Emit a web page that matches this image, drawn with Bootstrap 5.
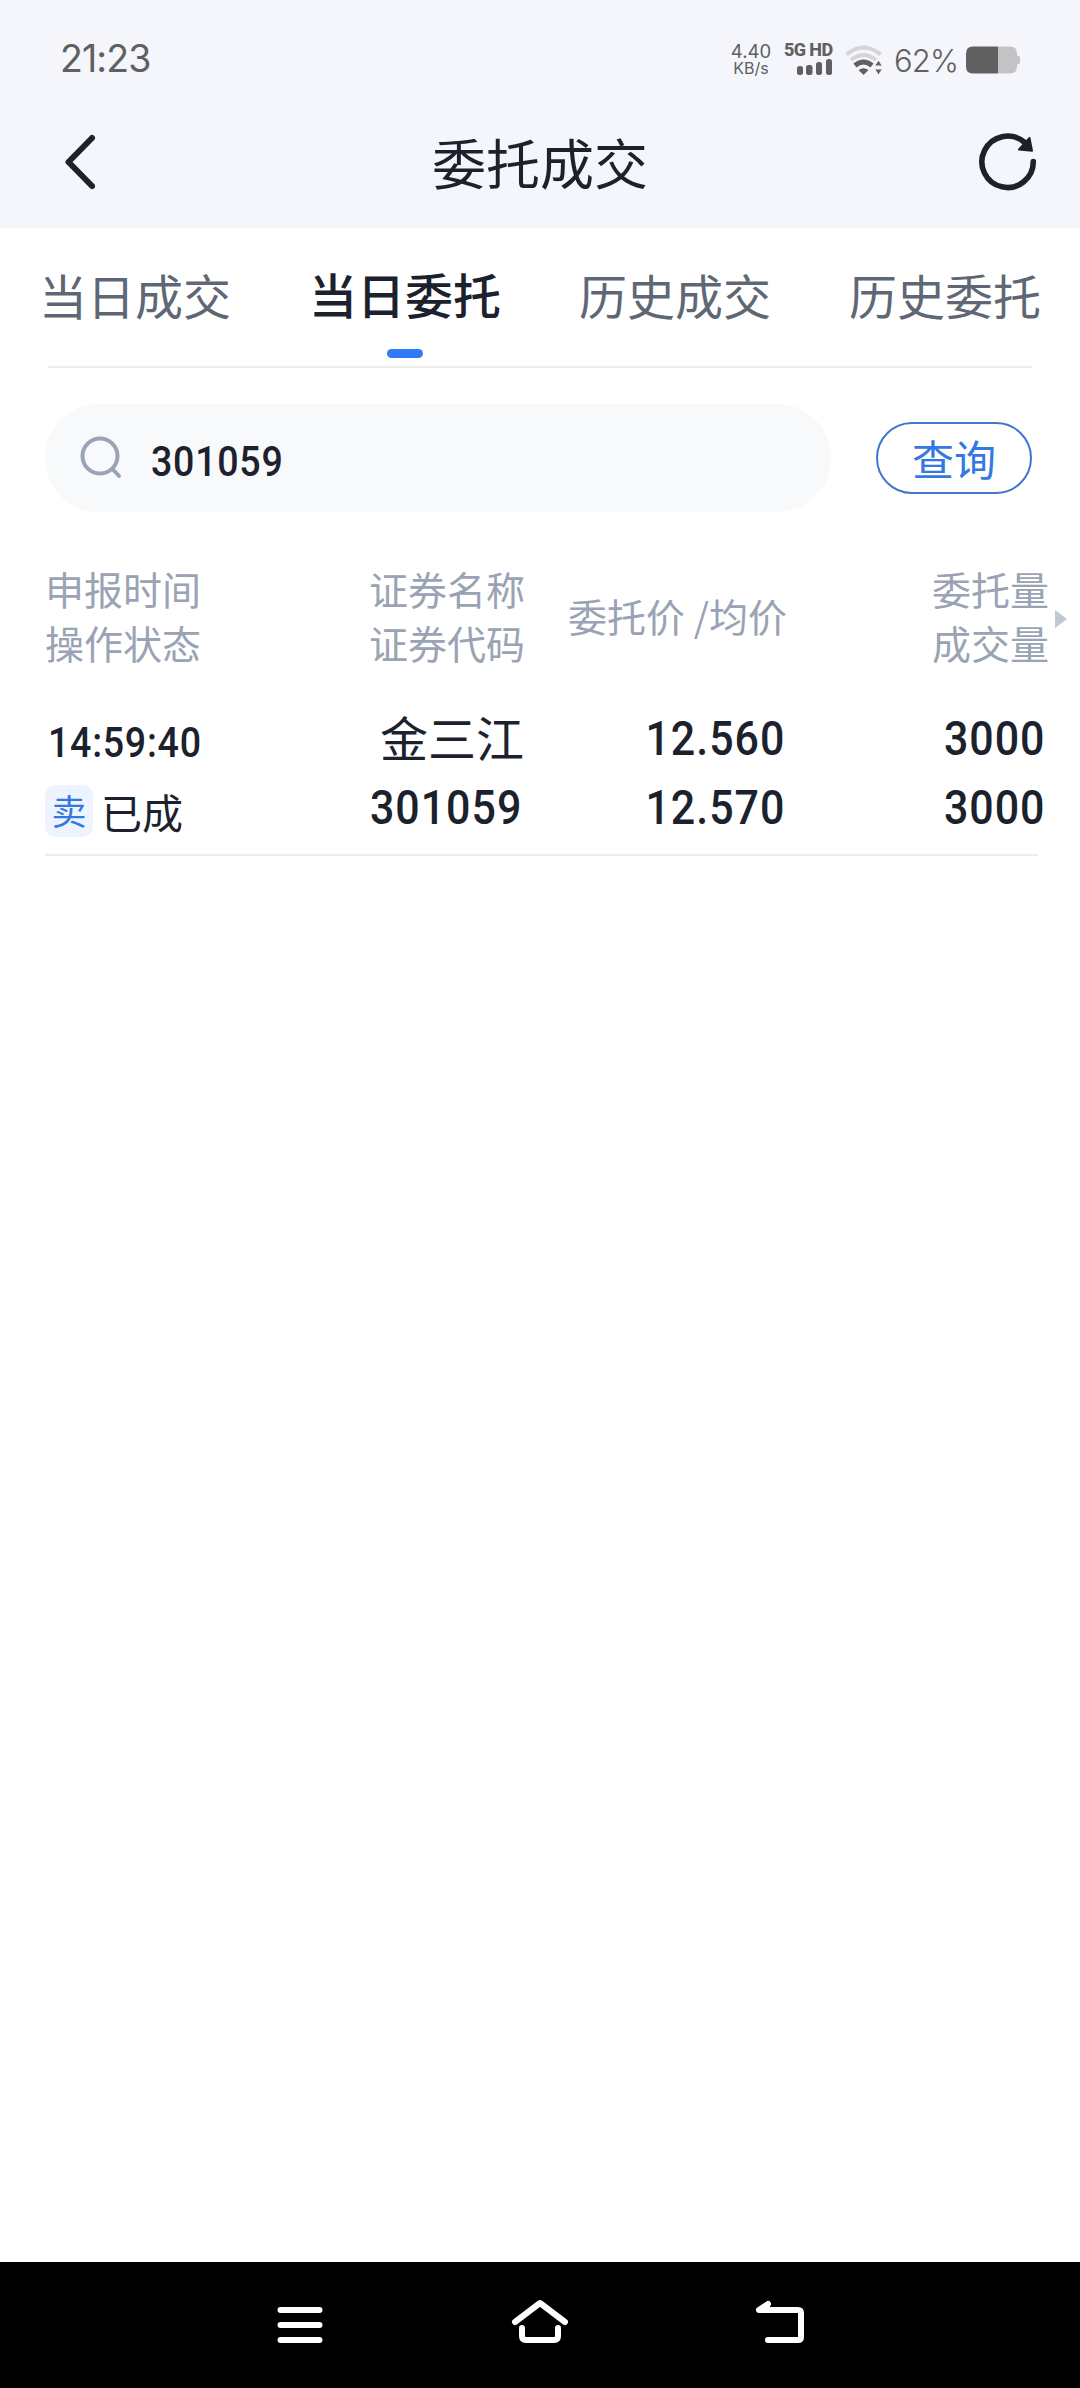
<!DOCTYPE html>
<html lang="zh-CN">
<head>
<meta charset="utf-8">
<meta name="viewport" content="width=device-width, initial-scale=1">
<title>委托成交</title>
<link href="https://cdn.jsdelivr.net/npm/bootstrap@5.3.0/dist/css/bootstrap.min.css" rel="stylesheet">
<style>
  body { font-family: "Noto Sans CJK SC", sans-serif; color: #1b222d; background: #fff; }
  svg { display: block; flex: none; }
  .screen { width: 1080px; height: 2388px; }
  .top-area { background: #f4f6fb; height: 228px; }
  .status-bar { height: 96px; padding: 20px 60px 0 60px; color: #606060; font-family: Inter, sans-serif; line-height: 1; }
  .clock { font-size: 37.5px; letter-spacing: -.9px; margin-top: 2px; }
  .net-rate { width: 42px; font-size: 18.5px; line-height: 17px; margin-right: 12px; margin-top: 2px; }
  .net-rate small { font-size: 16px; display: block; line-height: 16px; }
  .net-type { font: 800 18px/18px Roboto, sans-serif; letter-spacing: -.6px; white-space: nowrap; }
  .cell { width: 49px; margin-right: 12px; }
  .battery-text { font-size: 31px; font-weight: 300; width: 64px; letter-spacing: -.9px; margin: 0 8px 0 11px; white-space: nowrap; }
  .lowered { margin-top: 4px; }
  .title-bar { height: 132px; padding: 0 42px; }
  .title-bar h1 { font-size: 54px; font-weight: 400; line-height: 80px; }
  .tab-strip { height: 138px; color: #5f6775; font-size: 48px; line-height: 72px; }
  .tab-strip .nav-link { color: inherit; padding: 30px 0 0; height: 138px; }
  .tab-strip .nav-link.active { color: #1b222d; font-weight: 500; padding-top: 29px; }
  .tab-strip .active::after { content: ""; display: block; width: 36px; height: 9px; border-radius: 5px; background: #2f7bf5; margin: 20px auto 0; }
  .rule { height: 2px; background: #ececed; }
  .search-row { padding: 36px 48px 0 45px; }
  .search-box { width: 786px; height: 108px; border-radius: 54px; background: #f7f9fb; padding-left: 34px; }
  .query-btn { width: 156px; height: 72px; border: 2px solid #3f76cf; border-radius: 36px; color: #3478e2; font-size: 42px; line-height: 62px; padding: 1px 0 2px; }
  .din { font-family: Roboto, sans-serif; font-weight: 500; display: inline-block; white-space: nowrap; }
  .din-s { font-size: 42px; letter-spacing: .8px; transform: scaleX(.895); transform-origin: left center; line-height: 60px; }
  .din-l { font-size: 48px; letter-spacing: 1.1px; margin-right: 3px; transform: scaleX(.895); transform-origin: right center; line-height: 69px; }
  .keyword { margin-left: 28px; padding-top: 7px; }
  .orders { padding-left: 45px; }
  .c1 { width: 240px; } .c2 { width: 240px; } .c3 { width: 263px; } .c4 { width: 261px; }
  .head-row { margin-top: 49px; height: 125px; color: #9aa3b4; font-size: 39px; line-height: 54px; }
  .head-row .c3 { padding: 27px 1px 0 0; }
  .head-row .more { margin-left: 5px; }
  .data-row { height: 168px; padding-top: 18px; }
  .stamp { padding: 9px 0 0 3px; }
  .state-line { margin-top: 12px; }
  .stock { font-size: 48px; line-height: 69px; margin: -2px 1px 2px 0; }
  .sell-tag { width: 48px; height: 52px; border-radius: 10px; background: #eef4ff; color: #3478e2; font-size: 35px; line-height: 49px; }
  .state { font-size: 41px; line-height: 52px; margin-left: 8px; }
  .system-nav { height: 126px; background: #000; padding: 36px 274px 0; }
</style>
</head>
<body>
<div class="screen d-flex flex-column">
  <header class="top-area">
    <div class="status-bar d-flex align-items-center justify-content-between">
      <div class="clock">21:23</div>
      <div class="d-flex align-items-center">
        <div class="net-rate text-center">4.40<small>KB/s</small></div>
        <div class="cell">
          <div class="net-type">5G HD</div>
          <svg width="49" height="17" fill="#606060"><rect x="13" y="7" width="6" height="9" rx="2.5"/><rect x="22" y="6" width="6.5" height="10" rx="2.5"/><rect x="32" y="3" width="6" height="13" rx="2.5"/><rect x="42" y="0" width="6" height="16" rx="2.5"/></svg>
        </div>
        <svg class="lowered" width="38" height="30" viewBox="0 0 38 30" fill="none" stroke-width="4">
          <path d="M1.5 9.5Q18.500-4.500 35.500 9.500" stroke="#d3d5da"/>
          <path d="M6 15Q18.500 5 31 15" stroke="#d3d5da"/>
          <path d="M10 20.500Q18.500 13.500 27 20.500" stroke="#606060" stroke-width="5"/>
          <path d="M13.500 25Q18.500 21.500 23.500 25L18.500 30Z" fill="#606060"/>
          <path d="M29.500 21L33.500 15L37.500 21ZM29.500 24L33.500 30L37.500 24Z" fill="#606060" stroke="#f4f6fb" stroke-width="1"/>
        </svg>
        <div class="battery-text lowered">62%</div>
        <svg class="lowered" width="54" height="28" viewBox="0 0 54 28"><path d="M32 .5H44Q51 .5 51 7.500V9.500Q54 9.500 54 12V16Q54 18.500 51 18.500V20.500Q51 27.500 44 27.500H32Z" fill="#c3c3c6"/><path d="M32 .5H7Q0 .5 0 7.500V20.500Q0 27.500 7 27.500H32Z" fill="#606060"/></svg>
      </div>
    </div>
    <div class="title-bar d-flex align-items-center justify-content-between">
      <svg width="60" height="60" viewBox="-20 0 60 60" fill="none" stroke="#1b222d" stroke-width="6" stroke-linecap="round" stroke-linejoin="round"><path d="M30 6L6.500 30L30 54"/></svg>
      <h1 class="m-0">委托成交</h1>
      <svg width="60" height="60" viewBox="0 0 60 60" fill="none" stroke="#1b222d" stroke-width="5.600" stroke-linecap="round"><path d="M55.300 29.500A25.700 25.700 0 1 1 46 10"/><path d="M51.500 6L54 18.800L41 17.500Z" fill="#1b222d" stroke-width="2" stroke-linejoin="round"/></svg>
    </div>
  </header>

  <nav class="tab-strip nav nav-fill flex-nowrap">
    <a class="nav-link nav-item w-25">当日成交</a>
    <a class="nav-link nav-item w-25 active">当日委托</a>
    <a class="nav-link nav-item w-25">历史成交</a>
    <a class="nav-link nav-item w-25">历史委托</a>
  </nav>
  <div class="rule mx-5"></div>

  <section class="search-row d-flex align-items-center justify-content-between">
    <div class="search-box d-flex align-items-center">
      <svg width="44" height="46" viewBox="0 0 44 46" fill="none" stroke="#9ba4b4" stroke-width="4" stroke-linecap="round"><circle cx="21" cy="21" r="17.500"/><path d="M33.500 34L40 41"/></svg>
      <span class="din din-s keyword">301059</span>
    </div>
    <button class="btn query-btn">查询</button>
  </section>

  <section class="orders">
    <div class="head-row d-flex">
      <div class="c1"><div>申报时间</div><div>操作状态</div></div>
      <div class="c2 text-end"><div>证券名称</div><div>证券代码</div></div>
      <div class="c3 text-end">委托价 /均价</div>
      <div class="c4 text-end"><div>委托量</div><div>成交量</div></div>
      <svg class="more mt-5" width="14" height="20" viewBox="0 0 14 20"><path d="M1 1L13 10L1 19Z" fill="#c1c7d4"/></svg>
    </div>
    <div class="data-row d-flex">
      <div class="c1">
        <div class="stamp"><span class="din din-s">14:59:40</span></div>
        <div class="state-line d-flex"><span class="sell-tag text-center">卖</span><span class="state">已成</span></div>
      </div>
      <div class="c2 d-flex flex-column align-items-end"><span class="stock">金三江</span><span class="din din-l">301059</span></div>
      <div class="c3 d-flex flex-column align-items-end"><span class="din din-l">12.560</span><span class="din din-l">12.570</span></div>
      <div class="c4 d-flex flex-column align-items-end"><span class="din din-l">3000</span><span class="din din-l">3000</span></div>
    </div>
    <div class="rule" style="width:993px"></div>
  </section>

  <footer class="system-nav d-flex justify-content-between mt-auto">
    <svg width="52" height="50" viewBox="0 0 52 50" stroke="#fff" stroke-width="6" stroke-linecap="round"><path d="M6.500 12H45.500M6.500 27H45.500M6.500 42H45.500"/></svg>
    <svg width="60" height="50" viewBox="0 0 60 50" fill="none" stroke="#fff" stroke-width="6" stroke-linecap="round" stroke-linejoin="round"><path d="M5 24L30 5L55 24M12 30V38Q12 42 16 42H44Q48 42 48 38V30"/></svg>
    <svg width="52" height="50" viewBox="0 0 52 50" fill="none" stroke="#fff" stroke-width="6" stroke-linecap="round" stroke-linejoin="round"><path d="M14 6L5 12H44Q47 12 47 15V39Q47 42 44 42H14M13 7V11"/></svg>
  </footer>
</div>
<script src="https://cdn.jsdelivr.net/npm/bootstrap@5.3.0/dist/js/bootstrap.bundle.min.js"></script>
</body>
</html>
